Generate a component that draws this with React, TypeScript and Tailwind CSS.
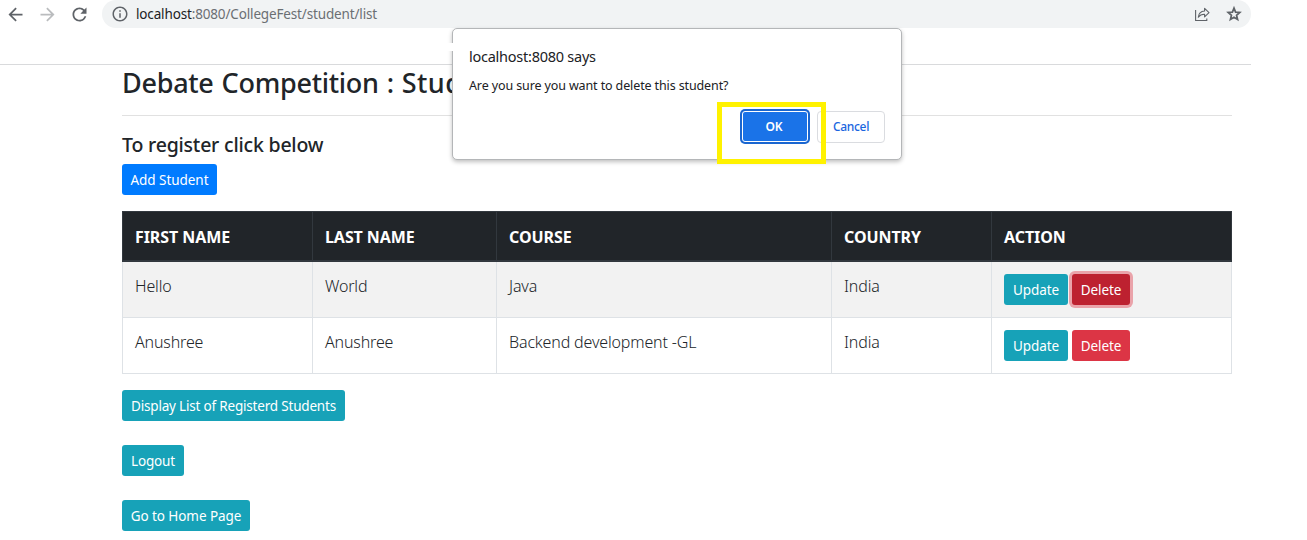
import type { ReactNode } from 'react';
import { MdArrowBack, MdArrowForward, MdInfoOutline, MdRefresh } from 'react-icons/md';

type ButtonProps = { children: ReactNode; className: string };

function Button({ children, className }: ButtonProps) {
  return (
    <button
      className={`flex h-[31px] shrink-0 items-center justify-center rounded-[3px] pt-[2px] text-[13.5px] leading-[21px] whitespace-nowrap text-white ${className}`}
    >
      {children}
    </button>
  );
}

function ShareIcon() {
  return (
    <svg width="16" height="16" viewBox="0 0 16 16" fill="none" stroke="#5f6368" strokeWidth="1.1">
      <path d="M1.6 4v10.5h11.2v-2" />
      <path d="M4.3 11.2C4.6 7.4 6.8 5.3 10.6 5V2.3L15 6.6l-4.4 4.2V8.2C7.9 8.1 5.8 9 4.3 11.2Z" strokeLinejoin="round" />
    </svg>
  );
}

function StarIcon() {
  return (
    <svg width="18" height="18" viewBox="0 0 24 24" className="ml-[15px]" fill="none" stroke="#5f6368" strokeWidth="2.3">
      <path d="M12 4.2 14.1 9.5l5.6.45-4.3 3.7 1.35 5.5L12 16.2l-4.75 2.95 1.35-5.5-4.3-3.7 5.6-.45Z" />
    </svg>
  );
}

function BrowserBar() {
  return (
    <div className="h-[65px] border-b border-[#d9dadc]">
      <div className="flex h-7 w-[1251px] items-center">
        <div className="flex w-[102px] items-center gap-[11px] pl-[5px] text-[#5f6368]">
          <MdArrowBack size={21} />
          <MdArrowForward size={21} className="text-[#babcbe]" />
          <MdRefresh size={21} />
        </div>
        <div className="flex h-7 flex-1 items-center rounded-full bg-[#f1f3f4] pr-[8px] pl-[9px] text-[#5f6368]">
          <MdInfoOutline size={18} />
          <p className="ml-[7px] flex-1 text-[13.5px] leading-5 tracking-[-0.15px] text-[#6b6f73]">
            <span className="text-[#202124]">localhost</span>:8080/CollegeFest/student/list
          </p>
          <ShareIcon />
          <StarIcon />
        </div>
      </div>
    </div>
  );
}

const columns = ['FIRST NAME', 'LAST NAME', 'COURSE', 'COUNTRY', 'ACTION'];

const students = [
  { first: 'Hello', last: 'World', course: 'Java', country: 'India', focused: true },
  { first: 'Anushree', last: 'Anushree', course: 'Backend development -GL', country: 'India', focused: false },
];

function StudentTable() {
  return (
    <table className="mt-4 w-[1110px] table-fixed border-separate border-spacing-0 text-left">
      <colgroup>
        <col className="w-[191px]" />
        <col className="w-[184px]" />
        <col className="w-[335px]" />
        <col className="w-[160px]" />
        <col className="w-[240px]" />
      </colgroup>
      <thead>
        <tr className="h-[51px] bg-[#212529]">
          {columns.map((name) => (
            <th
              key={name}
              className="border-t border-r border-b-2 border-[#32383e] p-0 pt-px pl-3 text-base leading-6 font-bold tracking-[-0.07px] text-white first:border-l"
            >
              {name}
            </th>
          ))}
        </tr>
      </thead>
      <tbody className="text-base leading-6 font-[350] tracking-[-0.15px]">
        {students.map((s) => (
          <tr key={s.first} className="h-14 odd:bg-[#f2f2f2]">
            {[s.first, s.last, s.course, s.country].map((value, i) => (
              <td key={i} className="border-r border-b border-[#dee2e6] p-0 pt-3 pl-3 align-top first:border-l">
                {value}
              </td>
            ))}
            <td className="border-r border-b border-[#dee2e6] p-0 pt-3 pl-3 align-top font-normal">
              <div className="flex gap-1 tracking-[-0.1px]">
                <Button className="w-16 bg-[#17a2b8]">Update</Button>
                <Button
                  className={
                    s.focused ? 'w-[58px] bg-[#bd2130] shadow-[0_0_0_3px_rgba(225,83,97,0.5)]' : 'w-[58px] bg-[#dc3545]'
                  }
                >
                  Delete
                </Button>
              </div>
            </td>
          </tr>
        ))}
      </tbody>
    </table>
  );
}

function ConfirmDialog() {
  return (
    <div className="absolute top-[28px] left-[452px] h-[132px] w-[450px] rounded-[5px] border border-[#b4b6b8] bg-white pt-[16px] pl-4 text-[#202124] shadow-[0_2px_4px_rgba(0,0,0,0.25)]">
      <p className="text-[14.5px] leading-[22px] tracking-[-0.25px]">localhost:8080 says</p>
      <p className="mt-[10px] text-[12.5px] leading-[18px] tracking-[-0.12px]">
        Are you sure you want to delete this student?
      </p>
      <div className="mt-[16px] flex justify-end gap-[9px] pr-4 text-xs">
        <button className="h-[31px] w-[66px] rounded-[3px] border border-white bg-[#1a73e8] pr-[2px] font-semibold text-white ring-2 ring-[#1a66d0]">
          OK
        </button>
        <button className="h-[32px] w-[68px] rounded-[4px] border border-[#dadce0] font-medium tracking-[-0.3px] text-[#1a66e0]">
          Cancel
        </button>
      </div>
      <div className="absolute top-[14px] -left-3 h-2 w-[13px] bg-white" />
      <div className="absolute top-[73px] left-[264px] h-[62px] w-[109px] border-5 border-[#fff200]" />
    </div>
  );
}

export default function App() {
  return (
    <div className="relative h-[540px] w-[1307px] overflow-hidden bg-white font-['Noto_Sans',sans-serif] text-[#212529]">
      <div className="w-[1251px]">
        <BrowserBar />
      </div>
      <main className="ml-[122px] w-[1110px]">
        <h3 className="h-[50px] pt-px text-[27px] leading-[34px] font-medium tracking-[-0.28px] whitespace-nowrap [word-spacing:1.3px]">
          Debate Competition : <span className="tracking-[0.4px]">Stud</span>
        </h3>
        <hr className="border-t border-[#e1e1e1]" />
        <h5 className="mt-[17px] text-[19.5px] leading-6 font-medium tracking-[-0.2px]">To register click below</h5>
        <div className="mt-[7px]">
          <Button className="w-[95px] bg-[#007bff] tracking-[-0.05px]">Add Student</Button>
        </div>
        <StudentTable />
        <div className="mt-4 flex flex-col gap-6">
          <Button className="w-[223px] bg-[#17a2b8] tracking-[-0.19px]">Display List of Registerd Students</Button>
          <Button className="w-[62px] bg-[#17a2b8] tracking-[-0.15px]">Logout</Button>
          <Button className="w-[128px] bg-[#17a2b8] tracking-[-0.07px]">Go to Home Page</Button>
        </div>
      </main>
      <ConfirmDialog />
    </div>
  );
}
